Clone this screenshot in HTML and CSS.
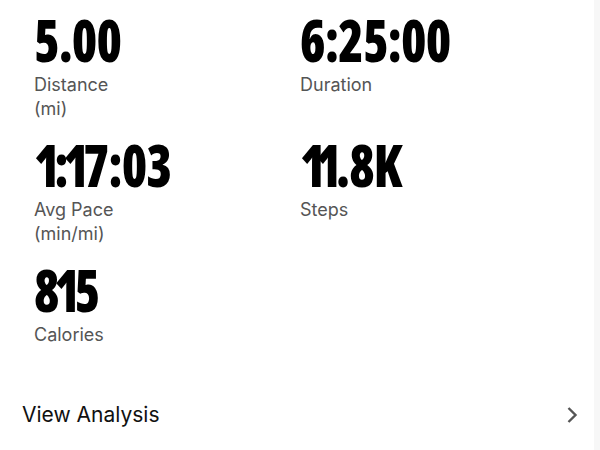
FILE: index.html
```html
<!DOCTYPE html>
<html>
<head>
<meta charset="utf-8">
<link rel="stylesheet" href="styles.css">
</head>
<body>
<div class="page">
  <div class="stats">
    <div class="stat">
      <div class="value">5.00</div>
      <div class="label">Distance (mi)</div>
    </div>
    <div class="stat">
      <div class="value">6:25:00</div>
      <div class="label">Duration</div>
    </div>
    <div class="stat">
      <div class="value"><span class="one">1</span>:<span class="one mid">1</span>7:03</div>
      <div class="label">Avg Pace (min/mi)</div>
    </div>
    <div class="stat">
      <div class="value"><span class="one">1</span><span class="one mid">1</span>.8K</div>
      <div class="label">Steps</div>
    </div>
    <div class="stat">
      <div class="value">8<span class="one mid">1</span>5</div>
      <div class="label">Calories</div>
    </div>
  </div>
  <div class="analysis">
    <span class="analysis-text">View Analysis</span>
    <svg class="chev" width="12" height="18" viewBox="0 0 12 18"><path d="M2.5 2 L9.5 9 L2.5 16" fill="none" stroke="#555" stroke-width="2.4"/></svg>
  </div>
  <div class="scrollbar"></div>
</div>
</body>
</html>
```
FILE: styles.css
```css
html, body {
  margin: 0;
  padding: 0;
  background: #fff;
}
.page {
  width: 600px;
  height: 450px;
  overflow: hidden;
  position: relative;
}
.stats {
  display: grid;
  grid-template-columns: 266px 266px;
  padding: 11px 0 0 34px;
  row-gap: 15px;
}
.value {
  font-family: "Open Sans", sans-serif;
  font-stretch: 75%;
  font-weight: 800;
  font-size: 58px;
  line-height: 58px;
  letter-spacing: -1px;
  color: #000;
  transform: scaleX(0.89);
  transform-origin: left center;
}
.one {
  letter-spacing: -6px;
}
.mid {
  margin-left: -5px;
}
.label {
  font-family: "Inter", "Roboto", sans-serif;
  font-size: 18px;
  line-height: 24px;
  color: #555;
  max-width: 110px;
  margin-top: 4px;
}
.analysis {
  display: flex;
  align-items: center;
  justify-content: space-between;
  padding: 0 22px 0 22px;
  margin-top: 55px;
}
.analysis-text {
  font-family: "Inter", "Roboto", sans-serif;
  font-size: 21px;
  color: #111;
}
.scrollbar {
  position: absolute;
  right: 0;
  top: 0;
  width: 6px;
  height: 450px;
  background: #f7f7f7;
}
```
